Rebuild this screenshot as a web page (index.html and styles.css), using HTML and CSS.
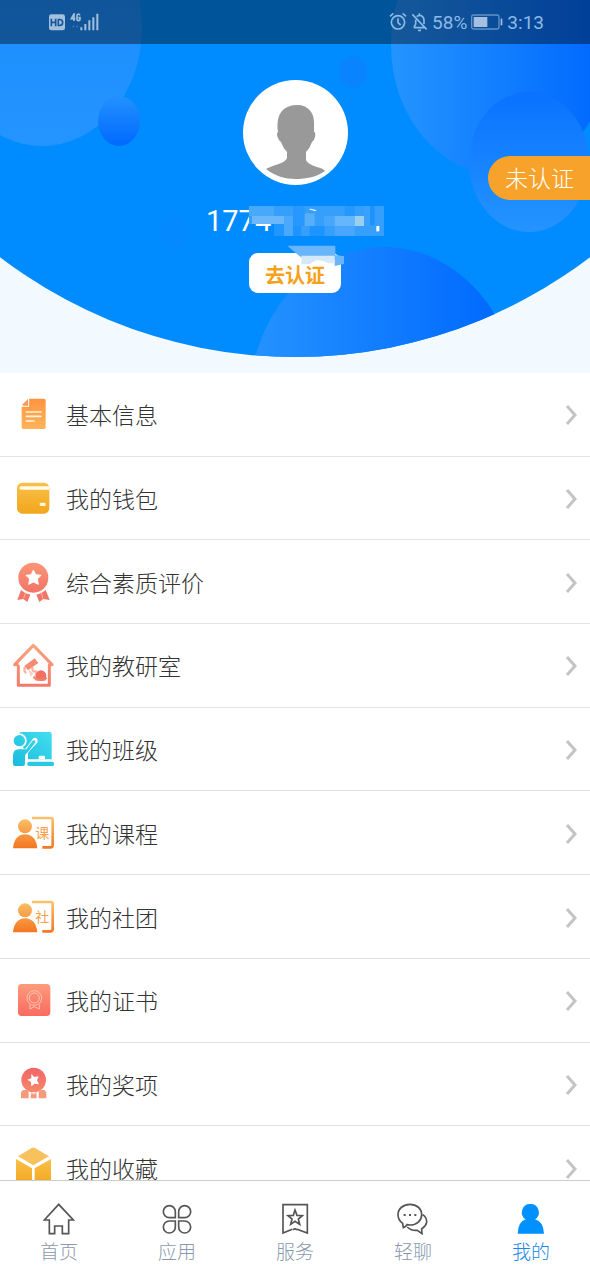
FILE: index.html
```html
<!DOCTYPE html>
<html lang="zh-CN">
<head>
<meta charset="utf-8">
<meta name="viewport" content="width=device-width, initial-scale=1">
<title>我的</title>
<link rel="stylesheet" href="styles.css">
</head>
<body>
<svg class="defs" aria-hidden="true">
  <defs>
    <linearGradient id="orange" x1="0" y1="0" x2="0" y2="1"><stop offset="0" stop-color="#ff9440"/><stop offset="1" stop-color="#ffb45a"/></linearGradient>
    <linearGradient id="gold" x1="0" y1="0" x2="0" y2="1"><stop offset="0" stop-color="#f9c04a"/><stop offset="1" stop-color="#f2a61c"/></linearGradient>
    <linearGradient id="coral" x1="0" y1="0" x2="0" y2="1"><stop offset="0" stop-color="#fb9678"/><stop offset="1" stop-color="#f27466"/></linearGradient>
    <linearGradient id="house" gradientUnits="userSpaceOnUse" x1="0" y1="0" x2="0" y2="132"><stop offset="0" stop-color="#f9a584"/><stop offset="1" stop-color="#f27a68"/></linearGradient>
    <linearGradient id="cyan" gradientUnits="userSpaceOnUse" x1="110" y1="10" x2="20" y2="120"><stop offset="0" stop-color="#42def0"/><stop offset="1" stop-color="#1bbdde"/></linearGradient>
    <linearGradient id="person" gradientUnits="userSpaceOnUse" x1="0" y1="15" x2="0" y2="114"><stop offset="0" stop-color="#fbc66c"/><stop offset="1" stop-color="#f4741f"/></linearGradient>
    <linearGradient id="cert" x1="0" y1="0" x2="0" y2="1"><stop offset="0" stop-color="#fb9b7c"/><stop offset="1" stop-color="#fb6a60"/></linearGradient>
    <linearGradient id="prize" x1="0" y1="0" x2="0" y2="1"><stop offset="0" stop-color="#f2646a"/><stop offset="1" stop-color="#f78a68"/></linearGradient>
    <symbol id="chevron" viewBox="0 0 14 22"><path d="M3 3 L11 12 L3 21" fill="none" stroke="#c4c4c4" stroke-width="3"/></symbol>
    <symbol id="member" viewBox="0 0 126 132">
      <g fill="url(#person)"><circle cx="39" cy="46" r="21"/><path d="M3 112 C5 86 18 70 39 70 C61 70 74 86 76 112Z"/></g>
      <path d="M60 21 H116 Q122 21 122 27 V102 Q122 109 115 109 H91" fill="none" stroke="url(#person)" stroke-width="8"/>
    </symbol>
  </defs>
</svg>

<header class="hero">
  <svg class="hero-art" viewBox="0 0 590 373" preserveAspectRatio="none" aria-hidden="true">
    <defs>
      <clipPath id="dome"><circle cx="295" cy="-129" r="486"/></clipPath>
      <linearGradient id="bubbleA" x1="0" y1="0" x2="0" y2="1"><stop offset="0" stop-color="#168aff"/><stop offset="1" stop-color="#2494ff"/></linearGradient>
      <linearGradient id="bubbleB" x1="0" y1="0" x2="0" y2="1"><stop offset="0" stop-color="#2391ff"/><stop offset="1" stop-color="#0069ff"/></linearGradient>
      <linearGradient id="bubbleC" gradientUnits="userSpaceOnUse" x1="391" y1="0" x2="600" y2="0"><stop offset="0" stop-color="#2494ff"/><stop offset="1" stop-color="#0069ff"/></linearGradient>
      <linearGradient id="bubbleD" x1="0" y1="0" x2="0" y2="1"><stop offset="0" stop-color="#0a72ff"/><stop offset="1" stop-color="#2494ff"/></linearGradient>
      <linearGradient id="bubbleE" gradientUnits="userSpaceOnUse" x1="253" y1="0" x2="500" y2="0"><stop offset="0" stop-color="#2492ff"/><stop offset="1" stop-color="#0069ff"/></linearGradient>
    </defs>
    <g clip-path="url(#dome)">
      <rect width="590" height="373" fill="#008cff"/>
      <ellipse cx="42" cy="28" rx="100" ry="118" fill="url(#bubbleA)"/>
      <ellipse cx="119" cy="121" rx="21" ry="25" fill="url(#bubbleB)"/>
      <ellipse cx="353" cy="72" rx="14" ry="16" fill="#0a83ff"/>
      <ellipse cx="174" cy="233" rx="14" ry="17" fill="#0489ff"/>
      <ellipse cx="501" cy="45" rx="110" ry="130" fill="url(#bubbleC)"/>
      <ellipse cx="529" cy="162" rx="60" ry="70" fill="url(#bubbleD)"/>
      <ellipse cx="384" cy="404" rx="135" ry="157" fill="url(#bubbleE)"/>
    </g>
  </svg>

  <div class="status">
    <div class="status-side">
      <svg width="50" height="18" viewBox="0 0 150 54" aria-hidden="true">
        <rect x="0" y="4" width="48" height="48" rx="7" fill="#a4bfdc"/>
        <g fill="none" stroke="#14579c" stroke-width="5"><path d="M7 17V40M20 17V40M7 28H20"/><path d="M28 19.500V37.500H32Q41 37.500 41 28.500T32 19.500Z"/></g>
        <g fill="none" stroke="#a4bfdc" stroke-width="5"><path d="M75 24V3L67 17H79"/><path d="M93 7Q91 3 88 3Q84 3 84 8V18Q84 23 88 23Q93 23 93 18V14H88"/></g>
        <path d="M69 43L73 36L77 43ZM80 38H88L84 45Z" fill="#4678ae"/>
        <path d="M94 43H100V52H94ZM106 33H112V52H106ZM118 22H124V52H118ZM130 13H136V52H130ZM142 2H148V52H142Z" fill="#a4bfdc"/>
      </svg>
    </div>
    <div class="status-side">
      <svg width="18" height="20" viewBox="0 0 54 60" fill="none" stroke="#8cb9e6" stroke-width="5" aria-hidden="true"><circle cx="27" cy="31" r="20"/><path d="M27 19V32L35 39M3 13L13 4M41 4L51 13"/></svg>
      <svg width="17" height="20" viewBox="0 0 51 60" fill="none" stroke="#8cb9e6" stroke-width="5" aria-hidden="true"><path d="M4 7L47 52M8 47H42M9 46L14 36V23M17 14Q24 8 31 11Q39 15 39 25V36M21 55H30M25 4V10"/></svg>
      <span>58%</span>
      <svg class="battery" width="32" height="16" viewBox="0 0 96 48" aria-hidden="true"><rect x="2" y="3" width="82" height="42" rx="5" fill="none" stroke="#6294c8" stroke-width="4"/><path d="M8 9H49V39H8Z" fill="#a6bfe0"/><path d="M89 14H94V34H89Z" fill="#a6bfe0"/></svg>
      <span>3:13</span>
    </div>
  </div>

  <div class="profile">
    <svg class="avatar" viewBox="0 0 105 105" role="img" aria-label="头像"><circle cx="52.500" cy="52.500" r="52.500" fill="#fff"/><path d="M53 25C63 24 71 31 71 42V52Q73 52 72 57Q71 61 69 62Q67 68 63 72V80C66 87 80 87 82 91C74 97 63 99 53 99C42 99 32 96 23 89C29 85 42 84 44 78V72Q40 68 38 62Q35 60 34 55Q34 52 35 52C33 36 38 26 53 25Z" fill="#999"/></svg>
    <div class="phone">
      <span>1774</span>
      <svg class="mask" viewBox="0 0 408 180" aria-hidden="true">
        <path d="M3 0H408V90H84V54H3Z" fill="#369ffc"/>
        <path d="M3 0H78V30H3Z" fill="#48a8fa"/><path d="M12 30H110V54H12Z" fill="#6ab7fb"/>
        <path d="M78 54H108V90H78Z" fill="#2196ff"/><path d="M108 30H135V90H108Z" fill="#49a9fd"/>
        <path d="M135 0H170V60H135Z" fill="#2798ff"/><path d="M170 22H200V60H170Z" fill="#58aff9"/>
        <path d="M135 60H160V90H135ZM185 60H230V90H185Z" fill="#1e94ff"/>
        <path d="M185 8Q196 7 207 14L200 16Q192 11 185 12Z" fill="#d8efff"/>
        <path d="M228 30H260V60H228ZM260 60H320V90H260Z" fill="#48a7fc"/>
        <path d="M260 30H320V60H260Z" fill="#65b6fc"/><path d="M320 30H348V60H320Z" fill="#9ad0ef"/>
        <path d="M290 0H320V30H290Z" fill="#2598ff"/><path d="M348 0H378V60H348Z" fill="#3ba1ff"/>
        <path d="M366 0H380V58H366Z" fill="#1d92ff"/><path d="M385 60H394V76H385Z" fill="#f4ffff"/>
        <path d="M118 119H262V147L288 151V174L260 180V162H170L144 142Z" fill="#68b5f9"/>
        <path d="M160 149H260V172H240Q225 162 204 163L186 174H160Z" fill="#d5e9fd"/>
      </svg>
    </div>
    <button class="verify" type="button">去认证</button>
  </div>
  <a class="badge" href="#verify">未认证</a>
</header>

<main class="scroll">
  <ul class="menu">
    <li><a class="row" href="#info">
      <svg class="icon" viewBox="0 0 126 132"><path d="M52 20H96Q101 20 101 25V106Q101 111 96 111H34Q29 111 29 106V44Z" fill="url(#orange)"/><path d="M30 39L48 21V35Q48 39 44 39Z" fill="#f69a63"/><path d="M29 43H50V20" fill="none" stroke="#fff" stroke-width="3"/><path d="M43 60H87M43 73H87M43 87H66" stroke="#fff3de" stroke-width="5" stroke-linecap="round"/></svg>
      <span class="label">基本信息</span><svg class="chevron"><use href="#chevron"/></svg></a></li>
    <li><a class="row" href="#wallet">
      <svg class="icon" viewBox="0 0 126 132"><rect x="15" y="20" width="97" height="93" rx="16" fill="url(#gold)"/><path d="M111 31H28Q22 31 22 36T28 41H111Z" fill="#fffbe8"/><rect x="83" y="80" width="18" height="10" rx="3" fill="#fff6d8"/></svg>
      <span class="label">我的钱包</span><svg class="chevron"><use href="#chevron"/></svg></a></li>
    <li><a class="row" href="#quality">
      <svg class="icon" viewBox="0 0 126 132"><circle cx="64" cy="53" r="45" fill="url(#coral)"/><path d="M64 30L71 44L87 46L76 57L79 73L64 66L50 73L53 57L42 46L58 44Z" fill="#fff" stroke="#fff" stroke-width="3" stroke-linejoin="round"/><path d="M27 90Q38 101 55 104L46 126L34 117L16 120ZM101 90Q90 101 73 104L82 126L94 117L113 120Z" fill="#f17668"/><path d="M41 97L35 115M87 97L93 115" stroke="#fbb5a2" stroke-width="3"/></svg>
      <span class="label">综合素质评价</span><svg class="chevron"><use href="#chevron"/></svg></a></li>
    <li><a class="row" href="#research">
      <svg class="icon" viewBox="0 0 126 132"><path d="M20 65L8 65L64 7L120 65H112V127H19V66" fill="none" stroke="url(#house)" stroke-width="9" stroke-linejoin="round"/><path d="M37 69L68 46L79 60L48 82Z" fill="#f48b72"/><path d="M39 72Q34 85 43 90M62 72Q57 86 73 86L71 103" fill="none" stroke="#f9b5a2" stroke-width="7"/><path d="M49 78L64 91L56 102Z" fill="#fcd0c2"/><circle cx="87" cy="98" r="16" fill="#f2705f"/><path d="M64 101L74 110H98L104 104" fill="none" stroke="#f4806d" stroke-width="6"/></svg>
      <span class="label">我的教研室</span><svg class="chevron"><use href="#chevron"/></svg></a></li>
    <li><a class="row" href="#class">
      <svg class="icon" viewBox="0 0 126 132"><path d="M20 22Q22 15 29 15H112Q119 15 119 22V97H46Z" fill="url(#cyan)"/><path d="M3 117V82Q4 65 21 65H40L63 37Q70 31 75 38L48 78V117Z" fill="#fff"/><path d="M43 95V76L73 45Q75 36 68 36Q65 36 62 42L47 67" fill="none" stroke="#fff" stroke-width="7"/><circle cx="22" cy="41" r="22" fill="#fff"/><circle cx="22" cy="41" r="17" fill="url(#cyan)"/><path d="M3 85Q4 67 20 67H43L61 42Q66 37 70 42Q71 45 69 48L46 77Q39 80 39 89V110Q39 117 32 117H9Q3 117 3 111Z" fill="url(#cyan)"/><path d="M80 97V90Q80 86 84 86H95Q99 86 99 90V97Z" fill="#fff"/><rect x="46" y="104" width="80" height="13" rx="5" fill="#28c9e2"/></svg>
      <span class="label">我的班级</span><svg class="chevron"><use href="#chevron"/></svg></a></li>
    <li><a class="row" href="#course">
      <svg class="icon" viewBox="0 0 126 132"><use href="#member"/><text class="icon-text" x="70" y="80">课</text></svg>
      <span class="label">我的课程</span><svg class="chevron"><use href="#chevron"/></svg></a></li>
    <li><a class="row" href="#club">
      <svg class="icon" viewBox="0 0 126 132"><use href="#member"/><text class="icon-text" x="70" y="80">社</text></svg>
      <span class="label">我的社团</span><svg class="chevron"><use href="#chevron"/></svg></a></li>
    <li><a class="row" href="#certificate">
      <svg class="icon" viewBox="0 0 126 132"><rect x="18" y="18" width="97" height="96" rx="11" fill="url(#cert)"/><g fill="none" stroke="#ffc3b0" stroke-width="3"><circle cx="67" cy="60" r="22"/><circle cx="67" cy="60" r="15"/><path d="M54 79V93L67 86L82 93V79"/></g></svg>
      <span class="label">我的证书</span><svg class="chevron"><use href="#chevron"/></svg></a></li>
    <li><a class="row" href="#prize">
      <svg class="icon" viewBox="0 0 126 132"><circle cx="65" cy="54" r="37" fill="url(#prize)"/><path d="M58 36L67 45L80 43L75 55L81 67L68 65L58 73L57 60L46 53L58 49Z" fill="#fff"/><path d="M33 84H44Q50 86 50 92V109H27V91ZM97 84H86Q80 86 80 92V109H103V91ZM56 97H74V109H56Z" fill="#f69a7e"/><path d="M57 93L65 97L74 93" fill="none" stroke="#f69a7e" stroke-width="3"/></svg>
      <span class="label">我的奖项</span><svg class="chevron"><use href="#chevron"/></svg></a></li>
    <li><a class="row" href="#favorites">
      <svg class="icon" viewBox="0 0 126 132"><path d="M59 6Q64 3 69 6L111 31L64 58L18 31Z" fill="#f7c25d"/><path d="M12 39L60 67V117H21Q12 117 12 108ZM117 39L68 67V117H108Q117 117 117 108Z" fill="url(#gold)"/></svg>
      <span class="label">我的收藏</span><svg class="chevron"><use href="#chevron"/></svg></a></li>
  </ul>
</main>

<nav class="tabs">
  <a class="tab" href="#home"><svg viewBox="0 0 96 96"><path d="M47 4L4 51H19V92H35V69H58V92H77V51H91Z"/></svg><span>首页</span></a>
  <a class="tab" href="#apps"><svg viewBox="0 0 96 96"><path d="M43 44V26A18 18 0 1 0 25 44ZM53 44V26A18 18 0 1 1 71 44ZM43 54V72A18 18 0 1 1 25 54ZM53 54V72A18 18 0 1 0 71 54Z"/></svg><span>应用</span></a>
  <a class="tab" href="#service"><svg viewBox="0 0 96 96"><path d="M40 79L12 90V5H85V90L54 79M42 80L48 77L54 80M48 21L54 37L70 38L58 48L62 64L48 55L35 64L39 48L27 38L43 37Z"/></svg><span>服务</span></a>
  <a class="tab" href="#chat"><svg viewBox="0 0 96 96"><path d="M19 74L17 61Q3 51 3 35C3 17 19 4 39 4S74 17 74 35S59 66 40 66Q34 66 30 65Q27 72 19 74ZM77 35Q90 44 89 58Q87 69 74 78L75 92L61 82Q42 84 31 72"/><path class="dots" d="M20 33H26V39H20ZM36 33H42V39H36ZM52 33H58V39H52Z"/></svg><span>轻聊</span></a>
  <a class="tab active" href="#me" aria-current="page"><svg viewBox="0 0 96 96"><path d="M46 3A25 25 0 0 1 60 49Q85 55 87 92H8Q10 55 32 49A25 25 0 0 1 46 3Z"/></svg><span>我的</span></a>
</nav>
</body>
</html>
```

FILE: styles.css
```css
* {
  box-sizing: border-box;
}

body {
  margin: 0;
  height: 100vh;
  display: flex;
  flex-direction: column;
  background: #fff;
  color: #333;
  font-family: Roboto, "Noto Sans CJK SC", sans-serif;
  font-weight: 300;
}

a {
  color: inherit;
  text-decoration: none;
}

svg {
  display: block;
  flex: none;
}

.defs {
  position: absolute;
  width: 0;
  height: 0;
}

.hero {
  position: relative;
  flex: none;
  padding-bottom: 80px;
  background: #f2f9ff;
}

.hero-art {
  position: absolute;
  inset: 0;
  width: 100%;
  height: 100%;
}

.status {
  position: relative;
  display: flex;
  justify-content: space-between;
  height: 44px;
  padding: 0 46px 0 49px;
  background: rgba(0, 0, 0, 0.4);
  color: #8cb9e6;
  font-size: 19px;
  font-weight: 400;
}

.status-side {
  display: flex;
  align-items: center;
  gap: 4px;
}

.profile {
  position: relative;
  display: flex;
  flex-direction: column;
  align-items: center;
  padding-top: 36px;
}

.avatar {
  width: 105px;
  height: 105px;
}

.phone {
  position: relative;
  width: 178px;
  margin: 17px 0 13px;
  color: #fff;
  font-size: 29px;
  font-weight: 400;
  line-height: 38px;
}

.mask {
  position: absolute;
  z-index: 1;
  top: 4px;
  right: 0;
  width: 136px;
  height: 60px;
}

.verify {
  width: 92px;
  height: 40px;
  padding: 2px 0 0;
  border: 0;
  border-radius: 9px;
  background: #fff;
  color: #f5a11c;
  font-family: inherit;
  font-size: 20px;
  font-weight: 700;
}

.badge {
  position: absolute;
  top: 156px;
  right: 0;
  width: 102px;
  padding: 4px 0 0 17px;
  border-radius: 22px 0 0 22px;
  background: #f7a32b;
  color: #fff;
  font-size: 23px;
  line-height: 40px;
}

.scroll {
  flex: 1;
  min-height: 0;
  overflow-y: auto;
  scrollbar-width: none;
}

.menu {
  display: grid;
  grid-auto-rows: 1fr;
  min-height: 837px;
  margin: 0;
  padding: 0;
  list-style: none;
}

.menu li {
  display: flex;
  border-bottom: 1px solid #e2e2e2;
}

.row {
  flex: 1;
  display: flex;
  align-items: center;
  gap: 12px;
  padding: 0 12px;
}

.icon {
  width: 42px;
  height: 44px;
}

.icon-text {
  fill: #f7a04a;
  font-size: 42px;
  font-weight: 400;
}

.label {
  flex: 1;
  padding-top: 6px;
  font-size: 23px;
  line-height: 34px;
}

.chevron {
  width: 14px;
  height: 22px;
}

.tabs {
  flex: none;
  display: flex;
  height: 98px;
  border-top: 1px solid #ccc;
  background: #fff;
}

.tab {
  flex: 1;
  display: flex;
  flex-direction: column;
  align-items: center;
  gap: 4px;
  padding-top: 22px;
  color: #8899ab;
  font-size: 19px;
  line-height: 28px;
}

.tab svg {
  width: 32px;
  height: 32px;
  fill: none;
  stroke: #555;
  stroke-width: 5;
}

.tab .dots {
  fill: #555;
  stroke: none;
}

.active {
  color: #1a86e8;
}

.tab.active svg {
  fill: #0091ff;
  stroke: none;
}
```
